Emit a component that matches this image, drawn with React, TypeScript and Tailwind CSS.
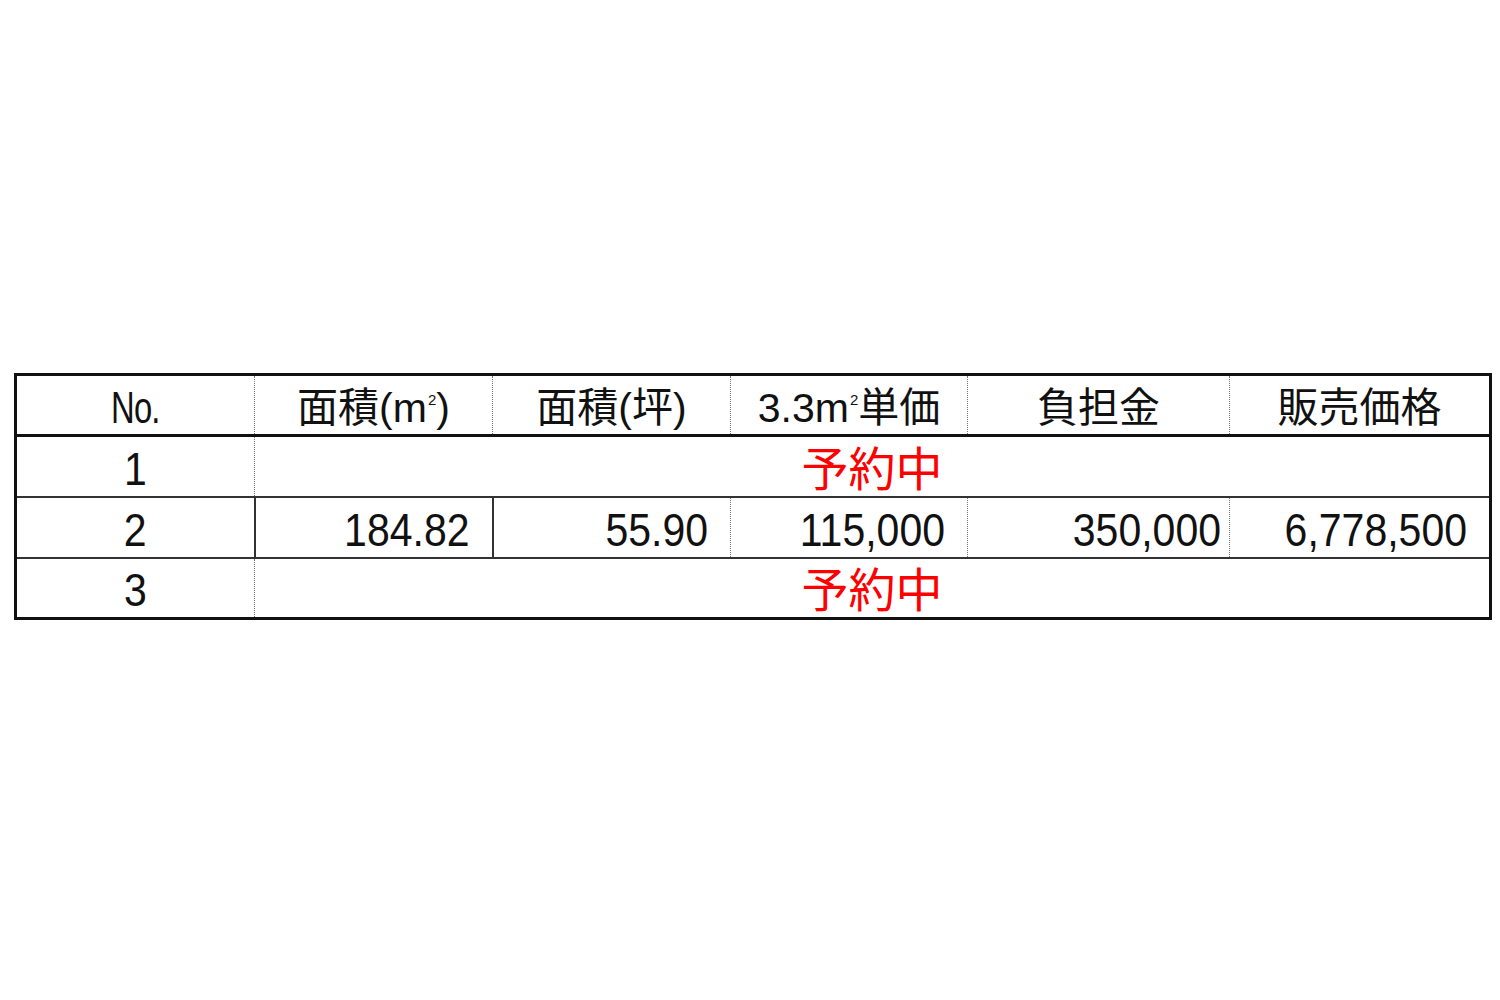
const font = { fontFamily: '"Liberation Sans", "Noto Sans CJK JP", sans-serif' };

function M2() {
  return (
    <span>
      m<span className="relative -top-[17px] text-[15px] ml-[1px]">2</span>
    </span>
  );
}

function Num({ children }: { children: React.ReactNode }) {
  return <span className="inline-block scale-y-[1.12] origin-center">{children}</span>;
}

const headers: React.ReactNode[] = [
  <span className="inline-block scale-x-[0.8] scale-y-[1.1] tracking-tight">No.</span>,
  <>面積(<M2 />)</>,
  '面積(坪)',
  <>3.3<M2 />単価</>,
  '負担金',
  '販売価格',
];

const cell = 'pt-[6px]';

export default function App() {
  return (
    <div className="w-[1500px] h-[1000px] bg-white pt-[373px] pl-[14px]" style={font}>
      <table className="table-fixed border-collapse border-[3px] border-[#111] w-[1475px] text-[#111] text-[41px] leading-none">
        <colgroup>
          <col className="w-[239px]" />
          <col className="w-[238px]" />
          <col className="w-[238px]" />
          <col className="w-[237px]" />
          <col className="w-[262px]" />
          <col className="w-[261px]" />
        </colgroup>
        <thead>
          <tr className="h-[61px] border-b-[3px] border-[#111]">
            {headers.map((h, i) => (
              <th
                key={i}
                className={
                  'font-normal text-center ' + cell + ' ' +
                  (i > 0 ? 'border-l border-dotted border-[#777]' : '')
                }
              >
                {h}
              </th>
            ))}
          </tr>
        </thead>
        <tbody>
          <tr className="h-[61px] border-b-2 border-[#333]">
            <td className={'text-center ' + cell}><Num>1</Num></td>
            <td colSpan={5} className={'border-l border-dotted border-[#777] text-center text-[#ff0000] text-[47px] ' + cell}>
              予約中
            </td>
          </tr>
          <tr className="h-[61px] border-b-2 border-[#333]">
            <td className={'text-center ' + cell}><Num>2</Num></td>
            <td className={'border-l-2 border-solid border-[#333] text-right pr-[22px] ' + cell}><Num>184.82</Num></td>
            <td className={'border-l-2 border-solid border-[#333] text-right pr-[22px] ' + cell}><Num>55.90</Num></td>
            <td className={'border-l border-dotted border-[#777] text-right pr-[22px] ' + cell}><Num>115,000</Num></td>
            <td className={'border-l border-dotted border-[#777] text-right pr-[8px] ' + cell}><Num>350,000</Num></td>
            <td className={'border-l border-dotted border-[#777] text-right pr-[22px] ' + cell}><Num>6,778,500</Num></td>
          </tr>
          <tr className="h-[61px]">
            <td className={'text-center ' + cell}><Num>3</Num></td>
            <td colSpan={5} className={'border-l border-dotted border-[#777] text-center text-[#ff0000] text-[47px] ' + cell}>
              予約中
            </td>
          </tr>
        </tbody>
      </table>
    </div>
  );
}
